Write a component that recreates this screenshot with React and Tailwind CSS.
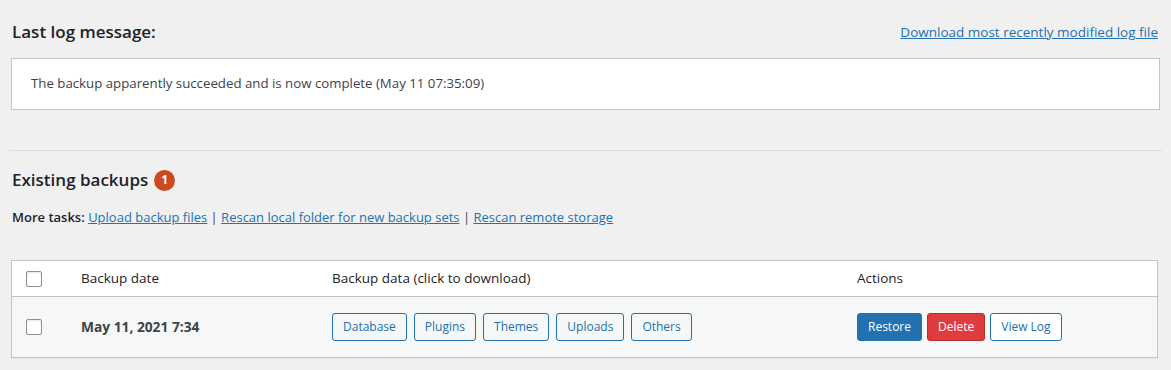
import React from 'react';

const Checkbox = () => (
  <span className="block w-4 h-4 bg-white border border-[#8c8f94] rounded-[2px] shadow-[inset_0_1px_2px_rgba(0,0,0,0.1)]" />
);

const DataButton = ({ label }) => (
  <button className="h-7 px-[10px] text-[12px] leading-none text-[#2271b1] bg-[#f6f7f7] border border-[#2271b1] rounded-[3px]">
    {label}
  </button>
);

export default function App() {
  const parts = ['Database', 'Plugins', 'Themes', 'Uploads', 'Others'];

  return (
    <div className="min-h-[370px] bg-[#f0f0f1] px-[11px] text-[13px] text-[#3c434a] font-['Open_Sans',sans-serif]">
      {/* last log */}
      <div className="flex items-end justify-between pt-[22px]">
        <h3 className="ml-px text-[17px] font-semibold text-[#1d2327] leading-5">Last log message:</h3>
        <a href="#" className="mr-[2px] text-[13.5px] text-[#2271b1] underline leading-5">Download most recently modified log file</a>
      </div>
      <div className="mt-[16px] h-[52px] bg-white border border-[#c3c4c7] flex items-center px-[19px] text-[13.25px]">
        The backup apparently succeeded and is now complete (May 11 07:35:09)
      </div>

      <hr className="mt-[40px] -mx-[2px] border-0 border-t border-[#dcdcde]" />

      {/* existing backups */}
      <div className="flex items-center h-5 mt-[19px] ml-px">
        <h3 className="text-[17px] font-semibold text-[#1d2327] leading-5">Existing backups</h3>
        <span className="ml-[6px] w-[21px] h-[21px] shrink-0 rounded-full bg-[#ca4a1f] text-white text-[12px] font-bold flex items-center justify-center">1</span>
      </div>
      <p className="mt-[17px] ml-px leading-5">
        <span className="font-semibold text-[#1d2327]">More tasks:</span>{' '}
        <a href="#" className="text-[#2271b1] underline">Upload backup files</a>
        {' | '}
        <a href="#" className="text-[#2271b1] underline">Rescan local folder for new backup sets</a>
        {' | '}
        <a href="#" className="text-[#2271b1] underline">Rescan remote storage</a>
      </p>

      {/* table */}
      <div className="mt-[33px] mr-[2px] border border-[#c3c4c7] shadow-[0_1px_1px_rgba(0,0,0,0.04)]">
        <div className="flex items-center h-[36px] bg-white border-b border-[#c3c4c7] text-[13.5px] text-[#1d2327]">
          <div className="w-[69px] pl-[14px]"><Checkbox /></div>
          <div className="w-[251px]">Backup date</div>
          <div className="w-[525px]">Backup data (click to download)</div>
          <div>Actions</div>
        </div>
        <div className="flex items-center h-[60px] bg-[#f6f7f7]">
          <div className="w-[69px] pl-[14px]"><Checkbox /></div>
          <div className="w-[251px] text-[13.75px] font-bold">May 11, 2021 7:34</div>
          <div className="w-[525px] flex gap-[7px]">
            {parts.map(p => <DataButton key={p} label={p} />)}
          </div>
          <div className="flex gap-[5px]">
            <button className="h-7 px-[10px] text-[12px] leading-none text-white bg-[#2271b1] border border-[#2271b1] rounded-[3px]">Restore</button>
            <button className="h-7 px-[10px] text-[12px] leading-none text-white bg-[#e03c3f] border border-[#b32d2e] rounded-[3px]">Delete</button>
            <button className="h-7 px-[10px] text-[12px] leading-none text-[#2271b1] bg-white border border-[#2271b1] rounded-[3px]">View Log</button>
          </div>
        </div>
      </div>
    </div>
  );
}
